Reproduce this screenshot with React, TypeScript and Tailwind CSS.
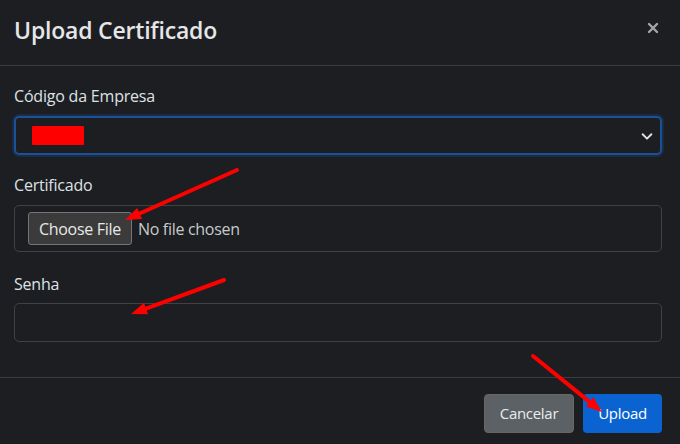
import React from 'react';

const Arrow = ({ x1, y1, x2, y2 }: { x1: number; y1: number; x2: number; y2: number }) => {
  const a = Math.atan2(y2 - y1, x2 - x1);
  const len = 16;
  const w = 6;
  const bx = x2 - len * Math.cos(a);
  const by = y2 - len * Math.sin(a);
  const p1 = `${bx + w * Math.sin(a)},${by - w * Math.cos(a)}`;
  const p2 = `${bx - w * Math.sin(a)},${by + w * Math.cos(a)}`;
  return (
    <g>
      <line x1={x1} y1={y1} x2={bx} y2={by} stroke="#ff0000" strokeWidth="4" strokeLinecap="round" />
      <polygon points={`${x2},${y2} ${p1} ${p2}`} fill="#ff0000" />
    </g>
  );
};

const App = () => {
  return (
    <div className="relative w-[680px] h-[444px] overflow-hidden bg-[#1c1e21] text-[#dee2e6] font-['Open_Sans',sans-serif]">
      <div className="flex items-start justify-between h-[66px] border-b border-[#3a3e42] pl-[14px] pr-[21px]">
        <h5 className="mt-[13px] text-[23px] font-semibold tracking-[-0.2px] text-[#e4e6e8]">Upload Certificado</h5>
        <svg className="mt-[22px]" width="12" height="12" viewBox="0 0 12 12" stroke="#a3a6a9" strokeWidth="2.4" strokeLinecap="round">
          <path d="M2 2l8 8M10 2l-8 8" />
        </svg>
      </div>

      <div className="pl-[14px] pr-[18px] pt-[19px] pb-[35px] border-b border-[#3a3e42]">
        <label className="block text-[16px] leading-[22px] tracking-[-0.2px] mb-[9px]">Código da Empresa</label>
        <div className="flex items-center justify-between h-[39px] rounded-[5px] border-2 border-[#1b5296] shadow-[0_0_0_2px_rgba(20,70,140,0.35)] pl-[16px] pr-[6px]">
          <div className="w-[52px] h-[19px] bg-[#ff0000] rounded-[1px]" />
          <svg width="14" height="14" viewBox="0 0 16 16" fill="none" stroke="#dee2e6" strokeWidth="2.2" strokeLinecap="round" strokeLinejoin="round">
            <path d="M3 6l5 5 5-5" />
          </svg>
        </div>

        <label className="block mt-[19px] text-[16px] leading-[22px] tracking-[-0.2px] mb-[9px]">Certificado</label>
        <div className="flex items-center h-[47px] rounded-[5px] border border-[#3e4246] pl-[13px]">
          <div className="h-[33px] px-[10px] flex items-center rounded-[3px] border border-[#767676] bg-[#3b3b3b] text-[16px] text-[#e8e8e8] tracking-[-0.3px]">Choose File</div>
          <span className="ml-[6px] text-[16px] text-[#c8cacc] tracking-[-0.3px]">No file chosen</span>
        </div>

        <label className="block mt-[21px] text-[16px] leading-[22px] tracking-[-0.2px] mb-[8px]">Senha</label>
        <div className="h-[39px] rounded-[5px] border border-[#3e4246]" />
      </div>

      <div className="flex justify-end gap-[9px] pr-[18px] pt-[16px]">
        <button className="h-[39px] w-[90px] rounded-[4px] border border-[#6b6660] bg-[#5c6165] text-[15px] text-[#e9ecef] tracking-[-0.3px]">Cancelar</button>
        <button className="h-[39px] w-[79px] rounded-[4px] bg-[#0b63d2] text-[15px] text-white tracking-[-0.3px]">Upload</button>
      </div>

      <svg className="absolute inset-0 pointer-events-none" width="680" height="444">
        <Arrow x1={237} y1={170} x2={125} y2={220} />
        <Arrow x1={224} y1={280} x2={131} y2={314} />
        <Arrow x1={533} y1={356} x2={602} y2={412} />
      </svg>
    </div>
  );
};

export default App;
